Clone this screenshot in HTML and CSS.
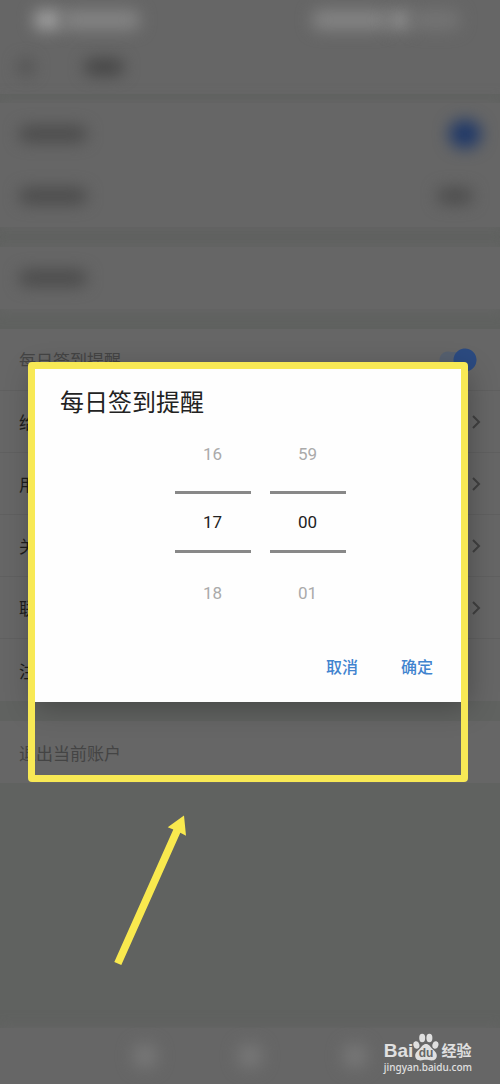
FILE: index.html
```html
<!DOCTYPE html>
<html lang="zh-CN">
<head>
    <meta charset="UTF-8">
    <meta name="viewport" content="width=device-width, initial-scale=1.0">
    <title>每日签到提醒</title>
    <link rel="stylesheet" href="styles.css">
</head>
<body>
<div class="screen">
    <div class="status-bar">
        <span class="smudge light bright"></span>
        <span class="smudge light wide"></span>
        <span class="smudge light signal"></span>
        <span class="smudge light battery"></span>
        <span class="smudge light clock"></span>
    </div>
    <header class="top-bar">
        <span class="smudge back"></span>
        <span class="smudge heading"></span>
    </header>

    <main class="settings">
        <section class="group soft">
            <div class="row">
                <span class="smudge label"></span>
                <span class="smudge blue"></span>
            </div>
            <div class="row">
                <span class="smudge label"></span>
                <span class="smudge value"></span>
            </div>
        </section>
        <section class="group soft">
            <div class="row"><span class="smudge label"></span></div>
        </section>
        <section class="group">
            <div class="row muted">
                <label for="sign-in">每日签到提醒</label>
                <input type="checkbox" id="sign-in" class="switch" checked>
            </div>
            <a class="row" href="#">给<svg class="chevron" viewBox="0 0 10 16"><path d="M2 2l6 6-6 6"/></svg></a>
            <a class="row" href="#">用<svg class="chevron" viewBox="0 0 10 16"><path d="M2 2l6 6-6 6"/></svg></a>
            <a class="row" href="#">关<svg class="chevron" viewBox="0 0 10 16"><path d="M2 2l6 6-6 6"/></svg></a>
            <a class="row" href="#">联<svg class="chevron" viewBox="0 0 10 16"><path d="M2 2l6 6-6 6"/></svg></a>
            <a class="row" href="#">注</a>
        </section>
        <section class="group">
            <a class="row muted" href="#">退出当前账户</a>
        </section>
    </main>

    <footer class="nav-bar">
        <span class="smudge key"></span>
        <span class="smudge key"></span>
        <span class="smudge key"></span>
        <div class="logo">
            <div class="logo-name">
                <span class="bai">Bai</span>
                <svg class="paw" viewBox="0 0 26 28">
                    <ellipse cx="3.4" cy="12" rx="3" ry="3.8" transform="rotate(-15 3.4 12)"/>
                    <ellipse cx="9.2" cy="5" rx="3" ry="4.2"/>
                    <ellipse cx="16.4" cy="5" rx="3" ry="4.2"/>
                    <ellipse cx="22.4" cy="12" rx="3" ry="3.8" transform="rotate(15 22.4 12)"/>
                    <path d="M13 11c-3 0-4.200 2.600-6 4.600-2 2.200-4.800 3.800-4.800 7.200 0 3 2.200 4.700 5 4.700 2.200 0 3.700-.7 5.800-.7s3.600.7 5.800.7c2.800 0 5-1.700 5-4.700 0-3.400-2.800-5-4.800-7.200-1.800-2-3-4.600-6-4.600z"/>
                    <text x="13" y="24" text-anchor="middle">du</text>
                </svg>
                <span class="jingyan">经验</span>
            </div>
            <div class="logo-url">jingyan.baidu.com</div>
        </div>
    </footer>

    <!-- Reminder time picker -->
    <div class="reminder">
        <form class="dialog" role="dialog" aria-labelledby="dialog-title">
            <h1 id="dialog-title">每日签到提醒</h1>
            <div class="picker">
                <div class="wheel">
                    <button type="button">16</button>
                    <input type="text" value="17" aria-label="时">
                    <button type="button">18</button>
                </div>
                <div class="wheel">
                    <button type="button">59</button>
                    <input type="text" value="00" aria-label="分">
                    <button type="button">01</button>
                </div>
            </div>
            <div class="actions">
                <button type="button">取消</button>
                <button type="button">确定</button>
            </div>
        </form>
        <div class="marker"></div>
    </div>
    <svg class="arrow" viewBox="0 0 76 152">
        <path d="M71 1.500L54.700 13.300l5.600 2.300L1.300 148l7 3 59-132.300 5.700 3z"/>
    </svg>
</div>
</body>
</html>
```
FILE: styles.css
```css
* {
  box-sizing: border-box;
}

body {
  margin: 0;
  font-family: Roboto, "Noto Sans CJK SC", sans-serif;
  font-size: 17px;
  background-color: #606260;
  color: #1c1c1c;
}

button,
input {
  font: inherit;
  margin: 0;
  padding: 0;
  border: none;
  background: none;
}

.screen {
  position: relative;
  min-height: 100vh;
  display: flex;
  flex-direction: column;
}

/* Blurred content */
.smudge {
  display: block;
  height: 16px;
  border-radius: 8px;
  background-color: #4a4a4a;
  filter: blur(8px);
}

.smudge.light {
  height: 20px;
  background-color: #848484;
}

.smudge.bright {
  width: 28px;
  background-color: #a0a0a0;
}

.smudge.wide {
  width: 78px;
}

.smudge.signal {
  width: 76px;
  margin-left: auto;
}

.smudge.battery {
  width: 24px;
  background-color: #8c8c8c;
}

.smudge.clock {
  width: 48px;
  background-color: #747474;
}

.smudge.back {
  width: 16px;
  background-color: #505050;
}

.smudge.heading {
  width: 40px;
  background-color: #444;
}

.smudge.label {
  width: 68px;
}

.smudge.value {
  width: 36px;
  margin-right: 8px;
  background-color: #4c4c4c;
}

.smudge.blue {
  width: 32px;
  height: 28px;
  border-radius: 14px;
  background-color: #1f3868;
}

.smudge.key {
  width: 24px;
  height: 24px;
  background-color: #777;
}

.status-bar {
  display: flex;
  align-items: center;
  height: 40px;
  padding: 0 40px 0 34px;
  background-color: #666;
}

.top-bar {
  display: flex;
  align-items: center;
  gap: 50px;
  height: 54px;
  padding: 0 18px;
  background-color: #666;
}

/* Settings list */
.settings {
  display: flex;
  flex-direction: column;
  gap: 20px;
  padding-top: 9px;
}

.group {
  background-color: #666;
}

.group.soft {
  box-shadow: 0 0 12px 2px #666;
}

.row {
  display: flex;
  align-items: center;
  justify-content: space-between;
  height: 62px;
  padding: 0 19px;
  border-bottom: 1px solid #606060;
  color: #1c1c1c;
  text-decoration: none;
}

.row:last-child,
.soft .row {
  border-bottom: none;
}

.muted {
  color: #444;
}

.chevron {
  width: 10px;
  height: 16px;
  fill: none;
  stroke: #404040;
  stroke-width: 2;
}

.switch {
  appearance: none;
  width: 38px;
  height: 24px;
  margin-right: 4px;
  border-radius: 12px;
  background: radial-gradient(circle at 26px 12px, #2b4a80 11px, transparent 12px),
    radial-gradient(circle at 9px 12px, #56606f 8px, transparent 9px),
    linear-gradient(#56606f, #56606f) 9px 4px / 16px 16px no-repeat;
}

/* Bottom keys */
.nav-bar {
  display: flex;
  align-items: center;
  gap: 81px;
  height: 56px;
  margin-top: auto;
  padding-left: 133px;
  background-color: #666;
  box-shadow: 0 0 12px #666;
  position: relative;
}

.logo {
  position: absolute;
  right: 28px;
  bottom: 11px;
  color: #e0e0e0;
}

.logo-name {
  display: flex;
  align-items: flex-end;
}

.bai {
  font-family: "Liberation Sans", sans-serif;
  font-size: 19px;
  font-weight: bold;
  line-height: 20px;
}

.paw {
  width: 26px;
  height: 28px;
  fill: #e0e0e0;
}

.paw text {
  font-family: "Liberation Sans", sans-serif;
  font-size: 12px;
  font-weight: bold;
  fill: #666;
}

.jingyan {
  font-size: 15px;
  font-weight: bold;
  line-height: 20px;
  margin-left: 2px;
}

.logo-url {
  font-family: "Noto Sans", sans-serif;
  font-size: 10px;
  font-weight: 500;
  line-height: 12px;
}

/* Reminder dialog */
.reminder {
  position: absolute;
  top: 362px;
  left: 28px;
  right: 32px;
  padding: 7px 0 80px 7px;
}

.dialog {
  padding: 0 35px 18px 25px;
  background-color: #fefefe;
  box-shadow: 0 4px 28px rgba(0, 0, 0, 0.3);
}

.dialog h1 {
  margin: 0;
  font-size: 24px;
  font-weight: 400;
  line-height: 68px;
  color: #222;
}

.picker {
  display: flex;
  justify-content: center;
  gap: 19px;
  padding-left: 27px;
}

.wheel {
  display: flex;
  flex-direction: column;
  width: 76px;
}

.wheel button {
  height: 34px;
  color: #aaa;
}

.wheel input {
  width: 100%;
  height: 62px;
  margin: 20px 0 23px;
  border-top: 3px solid #888;
  border-bottom: 3px solid #888;
  color: #222;
  text-align: center;
}

.actions {
  display: flex;
  justify-content: flex-end;
  gap: 43px;
  padding-top: 38px;
}

.actions button {
  height: 36px;
  color: #4184cf;
  font-size: 16px;
  font-weight: 500;
}

.marker {
  position: absolute;
  inset: 0;
  border: 7px solid #f8e955;
  border-radius: 4px;
  pointer-events: none;
}

.arrow {
  position: absolute;
  top: 814px;
  left: 113px;
  width: 76px;
  height: 152px;
  fill: #f9e94e;
}
```
